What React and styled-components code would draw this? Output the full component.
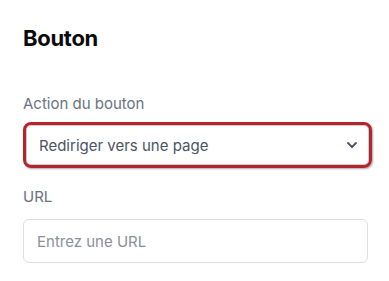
import React from 'react';
import styled, { createGlobalStyle } from 'styled-components';

const GlobalStyle = createGlobalStyle`
  body {
    margin: 0;
    background: #ffffff;
    font-family: Inter, 'Liberation Sans', sans-serif;
  }
`;

const Panel = styled.div`
  display: flex;
  flex-direction: column;
  padding: 24px 17px 0 23px;
  width: 389px;
  box-sizing: border-box;
`;

const Title = styled.h2`
  margin: 0 0 42px;
  font-size: 22px;
  line-height: 28px;
  font-weight: 700;
  color: #0b0b0b;
  letter-spacing: -0.3px;
`;

const Field = styled.div`
  display: flex;
  flex-direction: column;
  gap: ${({ gap }) => gap}px;
  margin-bottom: ${({ mb }) => mb}px;
`;

const Label = styled.label`
  font-size: 15px;
  line-height: 20px;
  color: #6b7280;
`;

const SelectBox = styled.div`
  display: flex;
  align-items: center;
  justify-content: space-between;
  width: 349px;
  height: 46px;
  box-sizing: border-box;
  border: 3px solid #b3242c;
  border-radius: 8px;
  box-shadow: inset 0 0 0 1px #c9ccd1, 1px 1px 2px rgba(0, 0, 0, 0.35);
  padding: 0 12px 0 13px;
  font-size: 15px;
  color: #4b5563;
`;

const Input = styled.div`
  display: flex;
  align-items: center;
  width: 345px;
  height: 44px;
  box-sizing: border-box;
  border: 1px solid #dcdfe3;
  border-radius: 6px;
  padding: 0 13px;
  font-size: 15px;
  color: #8b9098;
`;

const Chevron = () => (
  <svg width="10" height="6" viewBox="0 0 10 6" fill="none">
    <path d="M1 1l4 4 4-4" stroke="#4b5563" strokeWidth="1.8" strokeLinecap="round" strokeLinejoin="round" />
  </svg>
);

export default function App() {
  return (
    <>
      <GlobalStyle />
      <Panel>
        <Title>Bouton</Title>
        <Field gap={8} mb={19}>
          <Label>Action du bouton</Label>
          <SelectBox>
            <span>Rediriger vers une page</span>
            <Chevron />
          </SelectBox>
        </Field>
        <Field gap={12} mb={0}>
          <Label>URL</Label>
          <Input>Entrez une URL</Input>
        </Field>
      </Panel>
    </>
  );
}
